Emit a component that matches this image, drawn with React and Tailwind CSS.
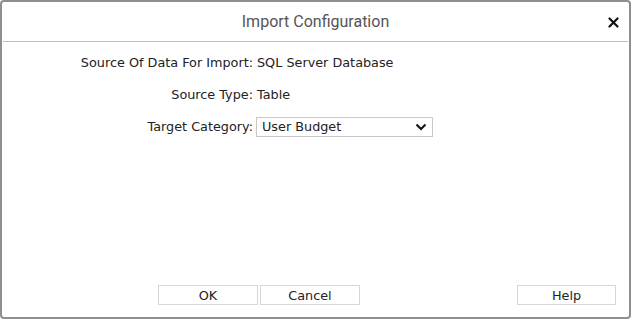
import React from 'react';

const rows = [
  { label: 'Source Of Data For Import:', value: 'SQL Server Database' },
  { label: 'Source Type:', value: 'Table' },
];

const ImportDialog = () => {
  return (
    <div className="w-[631px] h-[319px] bg-white border-2 border-[#8c8f93] rounded-[4px] flex flex-col font-['DejaVu_Sans',sans-serif] text-[12.8px] text-[#222]">
      {/* Header */}
      <div className="h-[40px] shrink-0 border-b border-[#b9c3cd] mx-px relative flex items-center justify-center">
        <span className="font-['Roboto',sans-serif] text-[16px] text-[#555]">Import Configuration</span>
        <button className="absolute right-[9px] top-[14px] w-[12px] h-[12px] flex items-center justify-center">
          <svg width="11" height="11" viewBox="0 0 11 11">
            <path d="M1.5 1.5 L9.5 9.5 M9.5 1.5 L1.5 9.5" stroke="#111" strokeWidth="2.2" strokeLinecap="round" />
          </svg>
        </button>
      </div>

      {/* Body */}
      <div className="flex-1 pt-[11px]">
        <div className="grid grid-cols-[251px_1fr] gap-x-[3px] items-center">
          {rows.map((r) => (
            <React.Fragment key={r.label}>
              <div className="text-right h-[32px] leading-[20px]">{r.label}</div>
              <div className="h-[32px] leading-[20px] pl-[1px]">{r.value}</div>
            </React.Fragment>
          ))}
          <div className="text-right h-[22px] leading-[22px] -mt-[1px]">Target Category:</div>
          <div className="h-[22px] flex items-center -mt-[1px]">
            <div className="w-[177px] h-[20px] border border-[#c8c8c8] flex items-center justify-between pl-[5px] pr-[5px]">
              <span>User Budget</span>
              <svg width="12" height="8" viewBox="0 0 12 8">
                <path d="M1.5 1.5 L6 6 L10.5 1.5" fill="none" stroke="#111" strokeWidth="2" />
              </svg>
            </div>
          </div>
        </div>
      </div>

      {/* Footer */}
      <div className="shrink-0 flex items-center pl-[156px] pr-[13px] pb-[12px]">
        <div className="flex gap-[2px]">
          <button className="w-[100px] h-[20px] border border-[#d6d6d6] bg-white leading-[18px] pt-px">OK</button>
          <button className="w-[100px] h-[20px] border border-[#d6d6d6] bg-white leading-[18px] pt-px">Cancel</button>
        </div>
        <div className="flex-1" />
        <button className="w-[99px] h-[20px] border border-[#d6d6d6] bg-white leading-[18px] pt-px">Help</button>
      </div>
    </div>
  );
};

export default function App() {
  return <ImportDialog />;
}
